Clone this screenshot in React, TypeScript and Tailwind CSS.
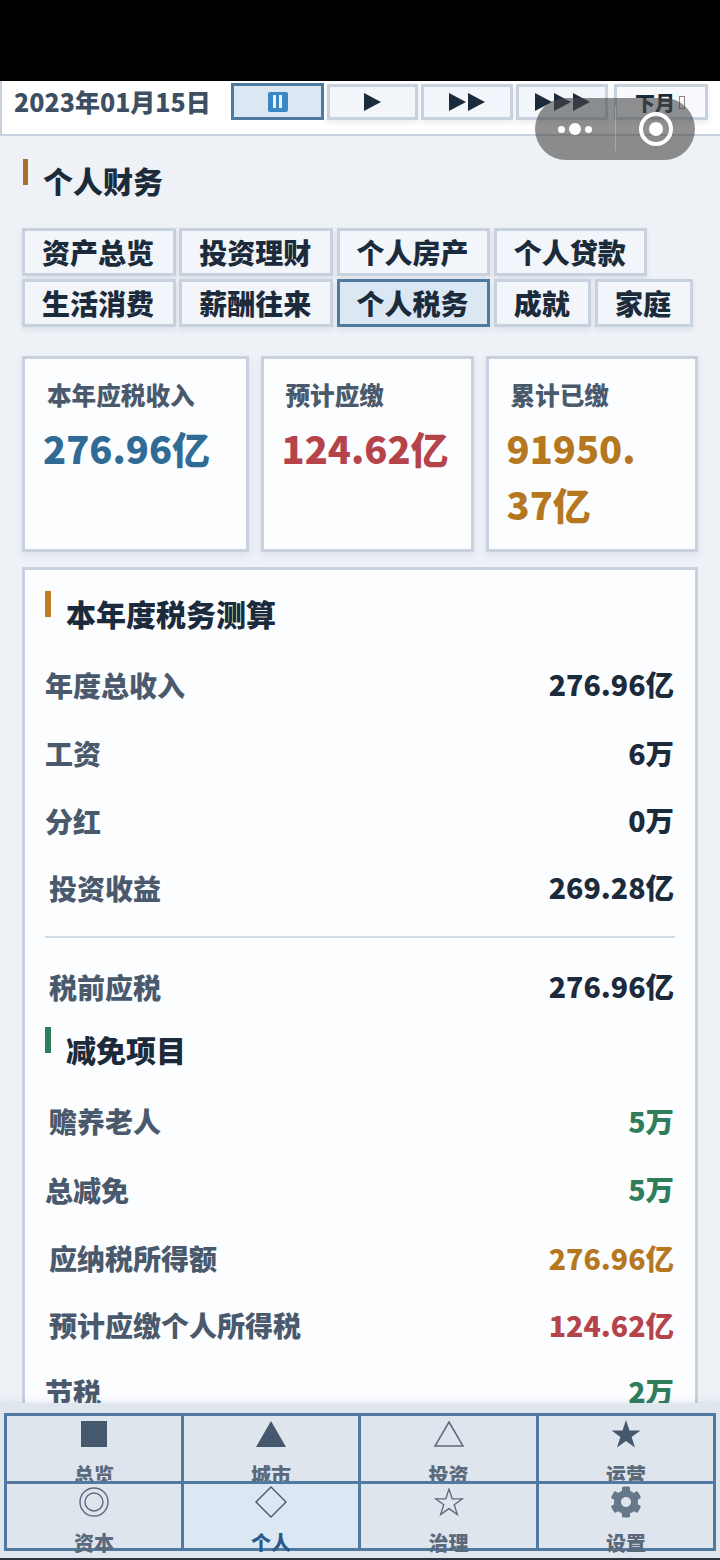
import { FaCog } from "react-icons/fa"

const tabs = [
  { name: "资产总览" },
  { name: "投资理财" },
  { name: "个人房产" },
  { name: "个人贷款" },
  { name: "生活消费" },
  { name: "薪酬往来" },
  { name: "个人税务", active: true },
  { name: "成就" },
  { name: "家庭" },
]

const Triangles = ({ count }: { count: number }) => (
  <div className="flex">
    {Array.from({ length: count }).map((_, i) => (
      <svg key={i} width="19" height="18" viewBox="0 0 19 18">
        <path d="M1 0L18 9L1 18Z" fill="#1c2b3b" />
      </svg>
    ))}
  </div>
)

const Row = ({ label, value, color = "text-[#1c2b3b]", pad = "pl-0", h = "h-[67px]" }: { label: string; value: string; color?: string; pad?: string; h?: string }) => (
  <div className={`flex items-center justify-between pr-[1px] ${pad} ${h}`}>
    <span className="text-[28px] font-black text-[#4a5a6c]">{label}</span>
    <span className={`text-[28.5px] font-black ${color}`}>{value}</span>
  </div>
)

const Tile = ({ label, active, icon }: { label: string; active?: boolean; icon: React.ReactNode }) => (
  <div className={`border-l-[3px] border-t-[3px] border-[#527aa0] flex flex-col items-center ${active ? "bg-[#dbe7f2]" : "bg-[#dfe5ed]"}`}>
    <div className="h-[36px] w-full flex items-center justify-center shrink-0">{icon}</div>
    <span className={`text-[20px] font-black leading-[36px] mt-[5px] ${active ? "text-[#2a5a8a]" : "text-[#5a6a7c]"}`}>{label}</span>
  </div>
)

const App = () => {
  return (
    <div className="w-[720px] h-[1560px] relative overflow-hidden flex flex-col bg-[#eef2f7] font-['Noto_Sans_CJK_SC',sans-serif]">
      <div className="h-[81px] bg-black shrink-0" />

      <div className="h-[55px] shrink-0 bg-white border-b-2 border-l-2 border-[#c8d1de] flex items-start pl-[12px] pt-[2px]">
        <span className="text-[25px] font-black text-[#3d4f63] leading-[38px] w-[217px] -mt-[1px]">2023年01月15日</span>
        <div className="w-[93px] h-[37px] border-[3px] border-[#4f7aa0] bg-[#dbe7f2] flex items-center justify-center">
          <div className="w-[20px] h-[20px] rounded-[2px] bg-[#3b87c4] flex items-center justify-center gap-[3px]">
            <div className="w-[3px] h-[13px] bg-[#e8f0f8]" />
            <div className="w-[3px] h-[13px] bg-[#e8f0f8]" />
          </div>
        </div>
        <div className="ml-[3px] mt-[1px] w-[91px] h-[36px] border-[3px] border-[#c8d1de] bg-[#f2f5f9] shadow-[0_3px_5px_rgba(60,80,110,0.1)] flex items-center justify-center"><Triangles count={1} /></div>
        <div className="ml-[3px] mt-[1px] w-[92px] h-[36px] border-[3px] border-[#c8d1de] bg-[#f2f5f9] shadow-[0_3px_5px_rgba(60,80,110,0.1)] flex items-center justify-center"><Triangles count={2} /></div>
        <div className="ml-[3px] mt-[1px] w-[92px] h-[36px] border-[3px] border-[#c8d1de] bg-[#f2f5f9] shadow-[0_3px_5px_rgba(60,80,110,0.1)] flex items-center justify-center"><Triangles count={3} /></div>
        <div className="ml-[6px] mt-[1px] w-[94px] h-[36px] border-[3px] border-[#c8d1de] bg-[#f7f9fc] shadow-[0_3px_5px_rgba(60,80,110,0.1)] flex items-center justify-center gap-[4px]">
          <span className="text-[20px] font-black text-[#1c2b3b] leading-none -ml-[2px] mt-[1px]">下月</span>
          <span className="w-[6px] h-[13px] border border-[#888]" />
        </div>
      </div>

      <div className="flex-1 overflow-hidden px-[22px]">
        <div className="flex items-start h-[92px] pt-[23px]">
          <div className="w-[5px] h-[26px] bg-[#a86f2a] ml-[1px]" />
          <h1 className="text-[30px] font-black text-[#1c2b3b] leading-[40px] ml-[15px] mt-[1px]">个人财务</h1>
        </div>

        <div className="flex flex-wrap gap-x-[3.75px] gap-y-[3px] w-[680px]">
          {tabs.map((t) => (
            <div key={t.name} className={`h-[48px] pl-[17px] pr-[18.5px] border-[3px] flex items-center text-[28px] font-black text-[#1c2b3b] whitespace-nowrap shadow-[0_3px_5px_rgba(60,80,110,0.1)] ${t.active ? "border-[#4f7aa0] bg-[#dbe7f2]" : "border-[#c8d1de] bg-[#f2f5f9]"}`}>
              {t.name}
            </div>
          ))}
        </div>

        <div className="flex gap-[12px] mt-[29px]">
          <div className="w-[226.5px] h-[196px] border-[3px] border-[#c8d1de] bg-[#fcfdff] pl-[18px] pt-[17px] shadow-[0_3px_8px_rgba(60,80,110,0.1)]">
            <div className="text-[24.6px] font-black text-[#4a5a6c] leading-[36px] ml-[4px]">本年应税收入</div>
            <div className="text-[38px] font-black text-[#2f6b95] leading-[56px] mt-[8px]">276.96亿</div>
          </div>
          <div className="w-[213px] h-[196px] border-[3px] border-[#c8d1de] bg-[#fcfdff] pl-[18px] pt-[17px] shadow-[0_3px_8px_rgba(60,80,110,0.1)]">
            <div className="text-[24.6px] font-black text-[#4a5a6c] leading-[36px] ml-[4px]">预计应缴</div>
            <div className="text-[38px] font-black text-[#b5434a] leading-[56px] mt-[8px]">124.62亿</div>
          </div>
          <div className="w-[212.5px] h-[196px] border-[3px] border-[#c8d1de] bg-[#fcfdff] pl-[18px] pt-[17px] shadow-[0_3px_8px_rgba(60,80,110,0.1)]">
            <div className="text-[24.6px] font-black text-[#4a5a6c] leading-[36px] ml-[4px]">累计已缴</div>
            <div className="text-[38px] font-black text-[#b5781f] leading-[56px] mt-[8px]">91950.<br />37亿</div>
          </div>
        </div>

        <div className="mt-[15px] border-[3px] border-[#c8d1de] bg-[#fcfdff] px-[20px] pt-[21px] h-[900px]">
          <div className="flex items-start h-[59px]">
            <div className="w-[6px] h-[26px] bg-[#bd7c22]" />
            <h2 className="text-[30px] font-black text-[#1c2b3b] leading-[44px] ml-[15px]">本年度税务测算</h2>
          </div>
          <Row label="年度总收入" value="276.96亿" h="h-[69px]" />
          <Row label="工资" value="6万" h="h-[68px]" />
          <Row label="分红" value="0万" />
          <Row label="投资收益" value="269.28亿" pad="pl-[4px]" />
          <div className="h-[2px] bg-[#d3dde3] mt-[15px] mb-[15px]" />
          <Row label="税前应税" value="276.96亿" pad="pl-[4px]" />
          <div className="flex items-start h-[60px] mt-[7px]">
            <div className="w-[6px] h-[26px] bg-[#2f7d5b]" />
            <h2 className="text-[30px] font-black text-[#1c2b3b] leading-[44px] ml-[15px]">减免项目</h2>
          </div>
          <Row label="赡养老人" value="5万" color="text-[#2f7d5b]" pad="pl-[4px]" h="h-[68px]" />
          <Row label="总减免" value="5万" color="text-[#2f7d5b]" h="h-[69px]" />
          <Row label="应纳税所得额" value="276.96亿" color="text-[#b5781f]" pad="pl-[4px]" h="h-[68px]" />
          <Row label="预计应缴个人所得税" value="124.62亿" color="text-[#b5434a]" pad="pl-[4px]" h="h-[66px]" />
          <Row label="节税" value="2万" color="text-[#2f7d5b]" />
        </div>
      </div>

      <div className="absolute left-0 right-0 bottom-0 h-[157px] bg-[#e0e6ee] pt-[10px] pl-[4px] border-b-2 border-[#2c3440] shadow-[0_-2px_6px_rgba(80,100,130,0.12)]">
        <div className="w-[712px] grid grid-cols-[177px_177px_178px_177px] grid-rows-[68px_67px] border-r-[3px] border-b-[3px] border-[#527aa0]">
          <Tile label="总览" icon={<div className="w-[26px] h-[26px] bg-[#46586d]" />} />
          <Tile label="城市" icon={<svg width="30" height="26" viewBox="0 0 30 26"><path d="M15 0L30 26H0Z" fill="#46586d" /></svg>} />
          <Tile label="投资" icon={<svg width="30" height="26" viewBox="0 0 30 26"><path d="M15 1L29 25H1Z" fill="none" stroke="#5a6a7c" strokeWidth="1.5" /></svg>} />
          <Tile label="运营" icon={<svg width="30" height="28" viewBox="0 0 30 28"><path d="M15 0L18.5 10.5H29.5L20.6 17L24 27.5L15 21L6 27.5L9.4 17L0.5 10.5H11.5Z" fill="#46586d" /></svg>} />
          <Tile label="资本" icon={<svg width="30" height="30" viewBox="0 0 30 30"><circle cx="15" cy="15" r="14" fill="none" stroke="#5a6a7c" strokeWidth="1.4" /><circle cx="15" cy="15" r="9" fill="none" stroke="#5a6a7c" strokeWidth="1.4" /></svg>} />
          <Tile label="个人" active icon={<svg width="32" height="32" viewBox="0 0 32 32"><path d="M16 1L31 16L16 31L1 16Z" fill="none" stroke="#46586d" strokeWidth="1.4" /></svg>} />
          <Tile label="治理" icon={<svg width="30" height="28" viewBox="0 0 30 28"><path d="M15 1L18.2 10.8H28.5L20.2 16.8L23.4 26.6L15 20.6L6.6 26.6L9.8 16.8L1.5 10.8H11.8Z" fill="none" stroke="#5a6a7c" strokeWidth="1.3" /></svg>} />
          <Tile label="设置" icon={<FaCog size={32} color="#66778a" />} />
        </div>
      </div>

      <div className="absolute left-[535px] top-[98px] w-[160px] h-[62px] rounded-[31px] bg-[rgba(70,70,70,0.6)] flex items-center">
        <div className="w-[80px] flex items-center justify-center gap-[4px]">
          <div className="w-[7px] h-[7px] rounded-full bg-white" />
          <div className="w-[12px] h-[12px] rounded-full bg-white" />
          <div className="w-[7px] h-[7px] rounded-full bg-white" />
        </div>
        <div className="w-[1px] h-[44px] bg-[rgba(255,255,255,0.25)]" />
        <div className="w-[79px] flex items-center justify-center">
          <div className="w-[34px] h-[34px] rounded-full border-[4px] border-white flex items-center justify-center">
            <div className="w-[14px] h-[14px] rounded-full bg-white" />
          </div>
        </div>
      </div>
    </div>
  )
}

export default App
